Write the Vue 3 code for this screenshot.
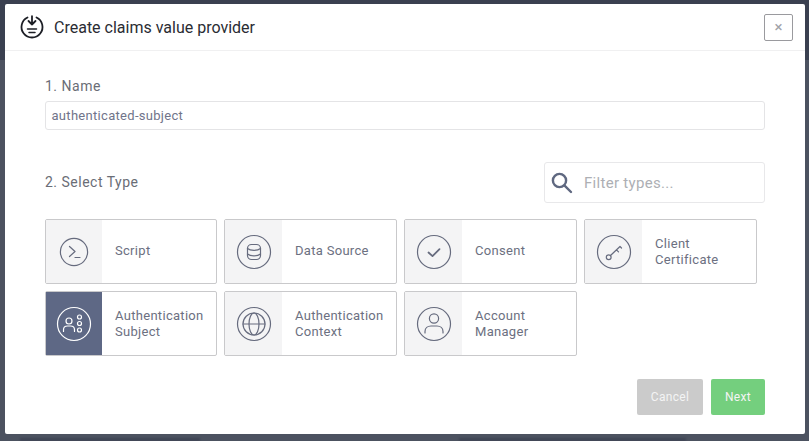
<script setup>
const types = [
  { id: 'script', lines: ['Script'] },
  { id: 'db', lines: ['Data Source'] },
  { id: 'check', lines: ['Consent'] },
  { id: 'key', lines: ['Client', 'Certificate'] },
  { id: 'subject', lines: ['Authentication', 'Subject'], active: true },
  { id: 'globe', lines: ['Authentication', 'Context'] },
  { id: 'user', lines: ['Account', 'Manager'] },
]
</script>

<template>
  <div class="backdrop">
    <section class="modal">
      <header class="head">
        <svg class="logo" width="26" height="26" viewBox="0 0 26 26" fill="none" stroke="#1d1f26" stroke-width="1.8" stroke-linecap="round">
          <path d="M8.500 3.500A10.500 10.500 0 1 0 17.500 3.500" />
          <path d="M13 2.200V10.500M9.500 7 13 10.500 16.500 7" stroke-linejoin="round" />
          <path d="M8.500 15h9M10 18.500h6" stroke-width="1.500" />
        </svg>
        <h1 class="title">Create claims value provider</h1>
        <button class="close" type="button" aria-label="Close">×</button>
      </header>

      <div class="body">
        <label class="label name-label">1. Name</label>
        <div class="name-input">authenticated-subject</div>

        <div class="select-row">
          <span class="label step">2. Select Type</span>
          <div class="filter">
            <svg width="24" height="24" viewBox="0 0 24 24" fill="none" stroke="#5f6880" stroke-width="2.4" stroke-linecap="round">
              <circle cx="9.500" cy="9.500" r="6.600" />
              <path d="M14.600 14.600 21 21" />
            </svg>
            <span class="placeholder">Filter types...</span>
          </div>
        </div>

        <div class="grid">
          <div v-for="t in types" :key="t.id" class="card" :class="{ active: t.active }">
            <div class="thumb">
              <svg width="36" height="36" viewBox="0 0 36 36" fill="none" stroke="currentColor" stroke-width="1.2" stroke-linecap="round" stroke-linejoin="round">
                <template v-if="t.id === 'script'">
                  <circle cx="18" cy="18" r="13.600" />
                  <path d="m13.500 12.500 5.500 5-5.500 5M19 23.500h5" />
                </template>
                <template v-else>
                  <circle cx="18" cy="18" r="16.500" />
                </template>
                <template v-if="t.id === 'db'">
                  <rect x="11.500" y="10.500" width="13" height="15" rx="4" />
                  <path d="M11.500 14.500c1.500 1.300 3.800 1.800 6.500 1.800s5-.5 6.500-1.800M11.500 20c1.500 1.300 3.800 1.800 6.500 1.800s5-.5 6.500-1.800" />
                </template>
                <path v-if="t.id === 'check'" d="m12.500 18.500 4 3.600 7-7" stroke-width="1.800" />
                <template v-if="t.id === 'key'">
                  <circle cx="12.700" cy="23.300" r="2.400" />
                  <path d="m14.500 21.500 9.500-9 1.500 1.500M20.500 15.800l2 2" />
                </template>
                <template v-if="t.id === 'subject'">
                  <circle cx="13" cy="15" r="3" />
                  <path d="M7.500 25.500v-1.800c0-2.200 1.800-3.700 4-3.700h3c2.200 0 4 1.500 4 3.700v1.800" />
                  <circle cx="23.500" cy="11" r="2" />
                  <circle cx="23.500" cy="17.500" r="2" />
                  <circle cx="23.500" cy="24" r="2" />
                </template>
                <template v-if="t.id === 'globe'">
                  <circle cx="18" cy="18" r="11" />
                  <ellipse cx="18" cy="18" rx="5" ry="11" />
                  <path d="M7 18h22" />
                </template>
                <template v-if="t.id === 'user'">
                  <circle cx="18" cy="12.500" r="4.600" />
                  <path d="M9 27v-1.500c0-3.300 2.700-5.500 6-5.500h6c3.300 0 6 2.200 6 5.500V27" />
                </template>
              </svg>
            </div>
            <div class="name">
              <span v-for="l in t.lines" :key="l">{{ l }}</span>
            </div>
          </div>
        </div>

        <div class="actions">
          <button class="btn cancel" type="button">Cancel</button>
          <button class="btn next" type="button">Next</button>
        </div>
      </div>
    </section>
    <div class="behind">
      <i class="smudge first"></i>
      <i class="smudge second"></i>
    </div>
  </div>
</template>

<style scoped>
.backdrop {
  width: 809px;
  height: 441px;
  box-sizing: border-box;
  padding: 4px 4px 0 5px;
  background: linear-gradient(#3a4050 0, #3a4050 60px, #4c5260 60px);
  overflow: hidden;
  font-family: Roboto, "Liberation Sans", sans-serif;
}
.modal {
  height: 430px;
  background: #fff;
  border-radius: 2px;
  display: flex;
  flex-direction: column;
}
.head {
  height: 47px;
  flex: none;
  box-sizing: border-box;
  border-bottom: 1px solid #f0f0f1;
  display: flex;
  align-items: center;
  padding: 0 12px 0 14px;
}
.logo { flex: none; }
.title {
  margin: 0 0 0 9px;
  font-size: 16px;
  font-weight: 400;
  color: #2a2c33;
  flex: 1;
}
.close {
  width: 29px;
  height: 27px;
  padding: 0;
  background: #fff;
  border: 1px solid #9a9a9e;
  border-radius: 2px;
  color: #a0a2a8;
  font: 400 15px/1 Roboto, sans-serif;
}
.body {
  flex: 1;
  padding: 0 40px;
  display: flex;
  flex-direction: column;
}
.label {
  font-size: 14px;
  color: #6a6d76;
  letter-spacing: 0.5px;
}
.name-label {
  margin-top: 27px;
  line-height: 17px;
}
.step { margin-bottom: 2px; }
.name-input {
  margin-top: 6px;
  height: 29px;
  box-sizing: border-box;
  border: 1px solid #e4e4e6;
  border-radius: 3px;
  padding: 0 5.5px;
  line-height: 27px;
  font-size: 13px;
  letter-spacing: 0.3px;
  color: #70748a;
}
.select-row {
  margin-top: 32px;
  height: 41px;
  display: flex;
  align-items: center;
  justify-content: space-between;
}
.filter {
  width: 221px;
  height: 41px;
  box-sizing: border-box;
  border: 1px solid #e8e8ea;
  border-radius: 3px;
  display: flex;
  align-items: center;
  padding-left: 5px;
  gap: 10px;
}
.placeholder {
  font-size: 15px;
  letter-spacing: 0.3px;
  color: #adafb4;
}
.grid {
  margin-top: 16px;
  display: grid;
  grid-template-columns: 172px 173px 173px 173px;
  grid-auto-rows: 65px;
  column-gap: 7px;
  row-gap: 7px;
}
.card {
  box-sizing: border-box;
  border: 1px solid #c9c9cb;
  border-radius: 2px;
  display: flex;
  background: #fff;
}
.thumb {
  width: 57px;
  flex: none;
  background: #f4f4f5;
  color: #666b7e;
  display: flex;
  align-items: center;
  justify-content: center;
}
.card:nth-child(4n + 1) .thumb { width: 56px; }
.active .thumb {
  background: #5e6885;
  color: #fff;
}
.name {
  padding-left: 13px;
  display: flex;
  flex-direction: column;
  justify-content: center;
  font-size: 13px;
  line-height: 16px;
  letter-spacing: 0.3px;
  color: #6c7081;
}
.name span:only-child { margin-bottom: 2px; }
.actions {
  margin-top: 23px;
  display: flex;
  justify-content: flex-end;
  gap: 8px;
}
.btn {
  height: 36px;
  border: 0;
  border-radius: 2px;
  padding: 0;
  color: #f4f4f4;
  font: 400 12px Roboto, sans-serif;
  letter-spacing: 0.3px;
}
.cancel { width: 66px; background: #cbcbcb; }
.next { width: 54px; background: #74cf7e; }
.behind {
  margin-top: 4px;
  height: 3px;
  position: relative;
}
.smudge {
  position: absolute;
  top: 0;
  height: 3px;
  background: #33384a;
  opacity: 0.55;
  filter: blur(0.8px);
}
.first { left: 15px; width: 180px; }
.second { left: 454px; width: 227px; }
</style>

<style>
html, body { margin: 0; background: #4c5260; }
</style>
